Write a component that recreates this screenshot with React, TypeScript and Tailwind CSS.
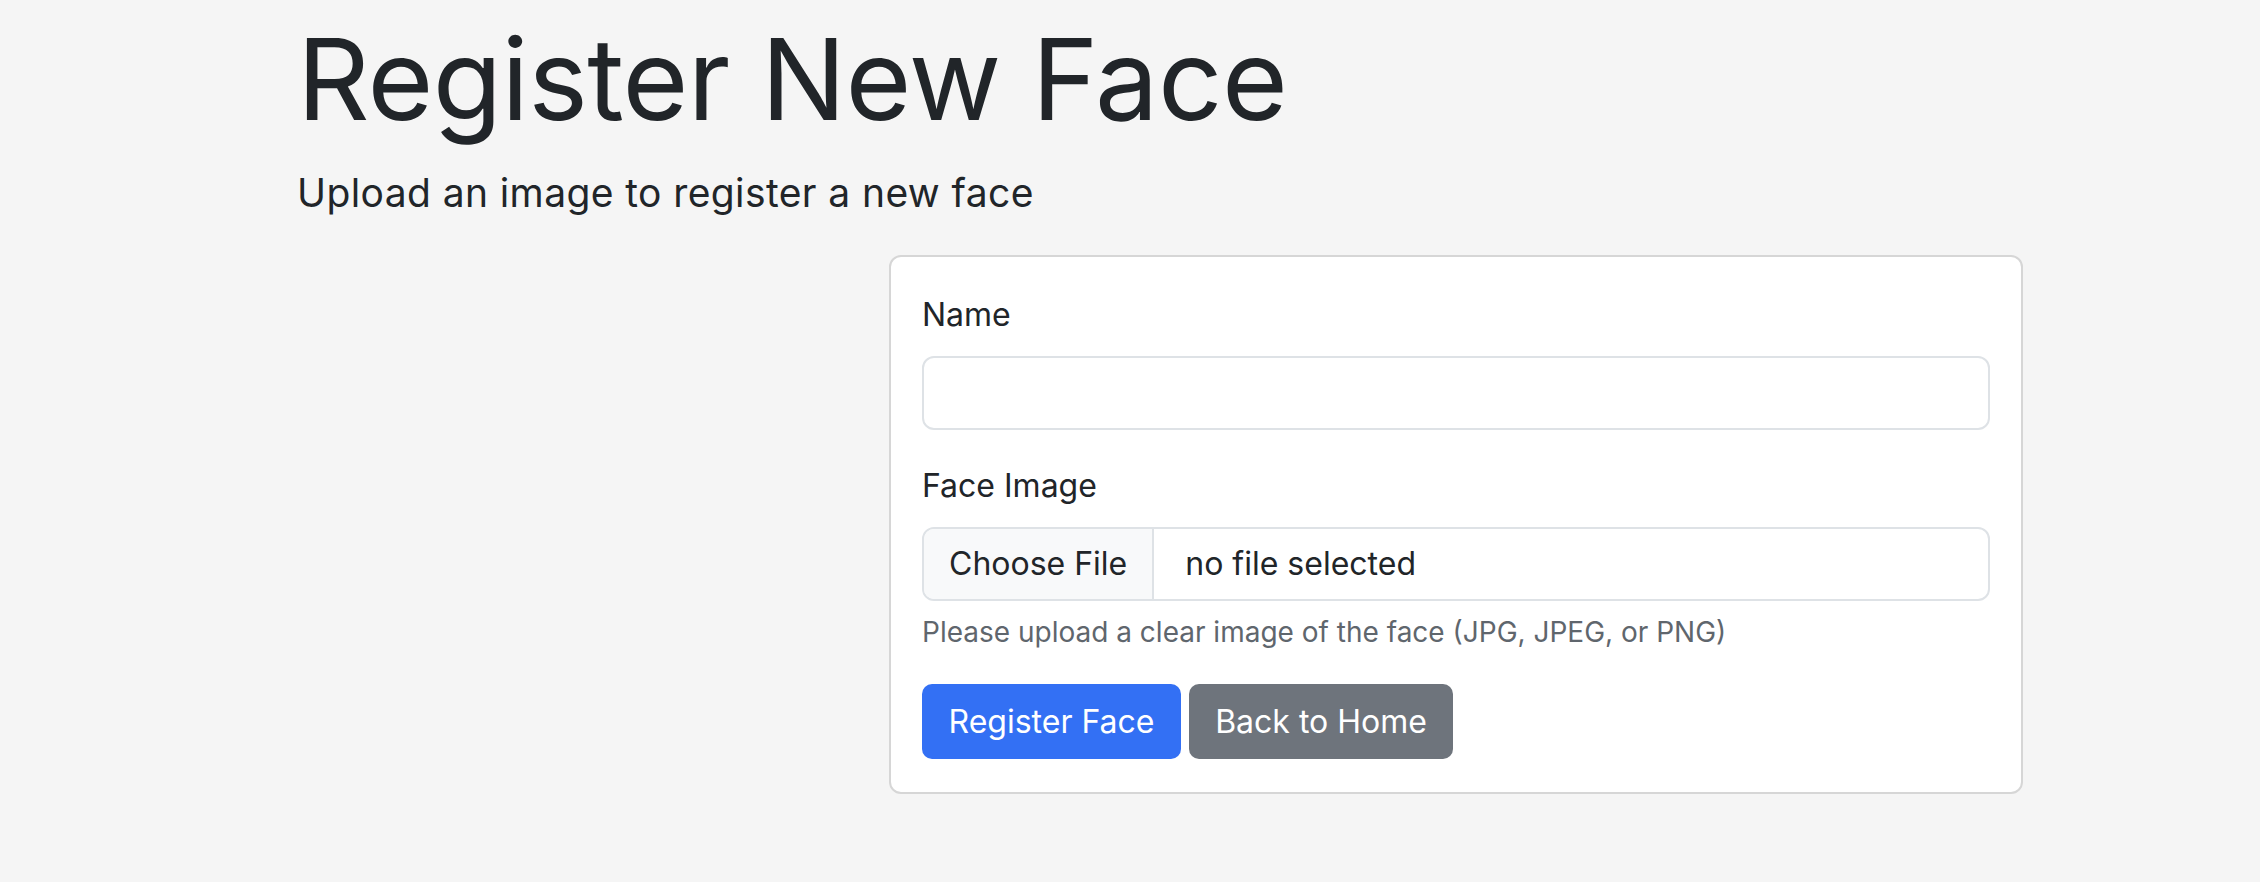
import React from 'react'

export default function App() {
  return (
    <div className="min-h-screen bg-[#f5f5f5] font-['Inter',sans-serif] text-[#212529]">
      <div className="pl-[297px] pt-[12px]">
        <h1 className="text-[113px] font-normal leading-[134px] tracking-[-0.6px]">
          Register New Face
        </h1>
        <p className="mt-[19px] text-[39px] font-normal leading-[56px] tracking-[0.4px]">
          Upload an image to register a new face
        </p>
      </div>
      <div className="mt-[34px] pl-[889px]">
        <form className="w-[1134px] rounded-[12px] border-2 border-[#d6d6d6] bg-white px-[31px] pt-[34px] pb-[33px]">
          <label className="mb-[17px] block text-[32px] leading-[48px]">
            Name
          </label>
          <input
            type="text"
            className="block h-[74px] w-full rounded-[12px] border-2 border-[#dee2e6] bg-white px-[24px] text-[32px] outline-none"
          />
          <label className="mt-[32px] mb-[17px] block text-[32px] leading-[48px]">
            Face Image
          </label>
          <div className="flex h-[74px] w-full overflow-hidden rounded-[12px] border-2 border-[#dee2e6] text-[32px]">
            <span className="flex items-center border-r-2 border-[#dee2e6] bg-[#f8f9fa] px-[25px]">
              Choose File
            </span>
            <span className="flex items-center pl-[31px]">
              no file selected
            </span>
          </div>
          <p className="mt-[11px] text-[28px] leading-[40px] text-[#5f666d]">
            Please upload a clear image of the face (JPG, JPEG, or PNG)
          </p>
          <div className="mt-[32px] flex gap-[8px]">
            <button
              type="submit"
              className="h-[75px] w-[259px] rounded-[10px] bg-[#3370f4] text-[32px] text-white"
            >
              Register Face
            </button>
            <button
              type="button"
              className="h-[75px] w-[264px] rounded-[10px] bg-[#6e747c] text-[32px] text-white"
            >
              Back to Home
            </button>
          </div>
        </form>
      </div>
    </div>
  )
}
